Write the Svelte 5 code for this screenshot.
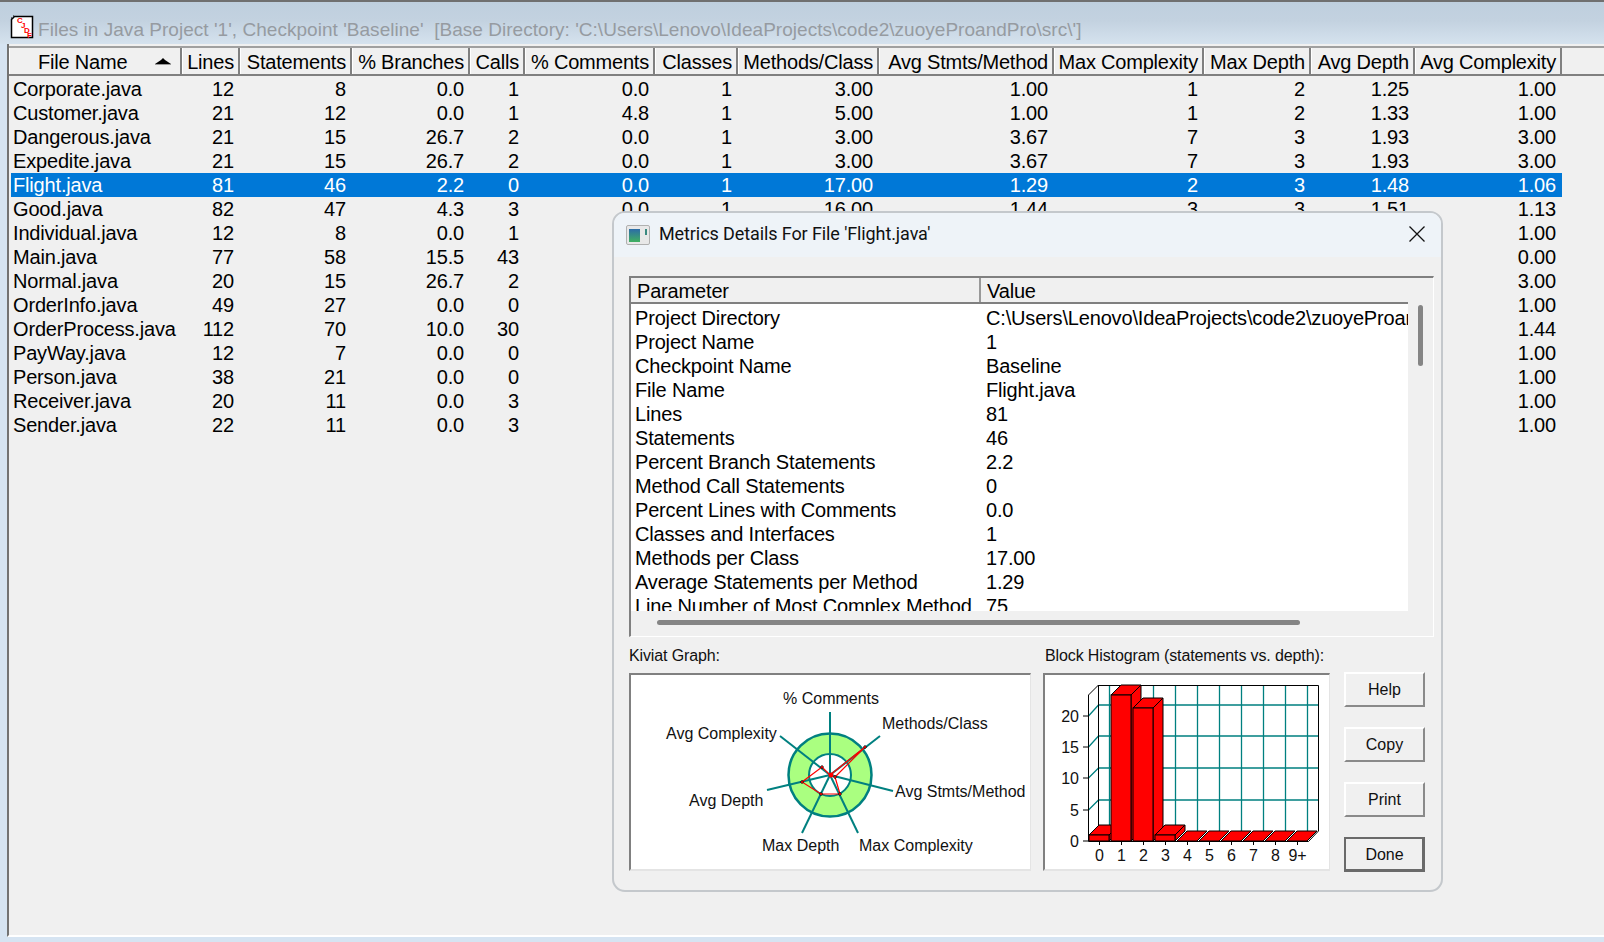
<script>
  const edges = [9,182,240,352,470,525,655,738,879,1054,1204,1311,1415,1562];
  const headers = ['File Name','Lines','Statements','% Branches','Calls','% Comments','Classes','Methods/Class','Avg Stmts/Method','Max Complexity','Max Depth','Avg Depth','Avg Complexity'];
  const tpl = edges.slice(1).map((e,i)=>(e-edges[i])+'px').join(' ');
  const rows = [
    ['Corporate.java','12','8','0.0','1','0.0','1','3.00','1.00','1','2','1.25','1.00'],
    ['Customer.java','21','12','0.0','1','4.8','1','5.00','1.00','1','2','1.33','1.00'],
    ['Dangerous.java','21','15','26.7','2','0.0','1','3.00','3.67','7','3','1.93','3.00'],
    ['Expedite.java','21','15','26.7','2','0.0','1','3.00','3.67','7','3','1.93','3.00'],
    ['Flight.java','81','46','2.2','0','0.0','1','17.00','1.29','2','3','1.48','1.06'],
    ['Good.java','82','47','4.3','3','0.0','1','16.00','1.44','3','3','1.51','1.13'],
    ['Individual.java','12','8','0.0','1','','','','','','','','1.00'],
    ['Main.java','77','58','15.5','43','','','','','','','','0.00'],
    ['Normal.java','20','15','26.7','2','','','','','','','','3.00'],
    ['OrderInfo.java','49','27','0.0','0','','','','','','','','1.00'],
    ['OrderProcess.java','112','70','10.0','30','','','','','','','','1.44'],
    ['PayWay.java','12','7','0.0','0','','','','','','','','1.00'],
    ['Person.java','38','21','0.0','0','','','','','','','','1.00'],
    ['Receiver.java','20','11','0.0','3','','','','','','','','1.00'],
    ['Sender.java','22','11','0.0','3','','','','','','','','1.00'],
  ];
  const details = [
    ['Project Directory','C:\\Users\\Lenovo\\IdeaProjects\\code2\\zuoyeProandPro\\src\\'],
    ['Project Name','1'],['Checkpoint Name','Baseline'],['File Name','Flight.java'],['Lines','81'],['Statements','46'],
    ['Percent Branch Statements','2.2'],['Method Call Statements','0'],['Percent Lines with Comments','0.0'],
    ['Classes and Interfaces','1'],['Methods per Class','17.00'],['Average Statements per Method','1.29'],
    ['Line Number of Most Complex Method','75'],
  ];

  // Kiviat graph, in page coordinates
  const cx = 830, cy = 775;
  const spokes = [[830,712],[880,736],[893,791],[858,833],[802,833],[767,790],[780,736]];
  const kLabels = [
    ['% Comments',783,704],['Methods/Class',882,729],['Avg Stmts/Method',895,797],
    ['Max Complexity',859,851],['Max Depth',762,851],['Avg Depth',689,806],['Avg Complexity',666,739],
  ];
  const poly = [[830,775],[865,747],[835,777],[840,794],[821,794],[802,782],[822,767]];
  const polyStr = poly.map(p=>p.join(',')).join(' ');

  // Histogram
  const bx = [1089,1111,1133,1155,1177,1199,1221,1243,1265,1287];
  const tops = [835,695,708,835,841,841,841,841,841,841];
  const gridY = [[705,716],[736,747],[768,778],[800,810]];
  const gridX = Array.from({length:10},(_,i)=>1109.5+22*i);
  const yLabels = [['20',716],['15',747],['10',778],['5',810],['0',841]];
  const xLabels = ['0','1','2','3','4','5','6','7','8','9+'];
</script>

<div class="screen">
  <div class="titlebar">
    <svg class="fileicon" width="24" height="24" viewBox="0 0 24 24">
      <path d="M4.500 1.500H22.500V22.500H1.500V4.500Z" fill="#fff" stroke="#000" stroke-width="1.500"/>
      <path d="M1 3h1M3 1h1" stroke="#000" stroke-width="1"/>
      <text x="7" y="8" class="ic">C</text>
      <text x="11" y="13" class="ic">J</text>
      <text x="14" y="18" class="ic">D</text>
      <text x="17" y="23" class="ic">F</text>
    </svg>
    <span class="wintitle">Files in Java Project '1', Checkpoint 'Baseline'&nbsp;&nbsp;[Base Directory: 'C:\Users\Lenovo\IdeaProjects\code2\zuoyeProandPro\src\']</span>
  </div>

  <div class="window">
    <div class="thead">
      <div class="hgrid" style="grid-template-columns:{tpl}">
        {#each headers as h, i}
          <div class="th">
            {h}
            {#if i === 0}
              <svg class="sort" width="16" height="7" viewBox="0 0 16 7"><path d="M0 6 6 2 8 0 10 2 16 6Z" fill="#000"/><path d="M0 6.500H16" stroke="#999" stroke-width="1"/></svg>
            {/if}
          </div>
        {/each}
      </div>
    </div>
    <div class="tbody">
      {#each rows as r, n}
        <div class="row" class:sel={n === 4} style="grid-template-columns:{tpl}">
          {#each r as c, i}
            <div class="td" class:name={i === 0}>{c}</div>
          {/each}
        </div>
      {/each}
    </div>
  </div>

  <div class="dialog">
    <div class="dlgtitle">
      <svg width="24" height="20" viewBox="0 0 24 20">
        <defs><linearGradient id="ig" x1="0" y1="0" x2="0" y2="1"><stop offset="0" stop-color="#2c6ca8"/><stop offset="1" stop-color="#40b060"/></linearGradient></defs>
        <rect x="0.500" y="0.500" width="23" height="19" rx="1.500" fill="#e8e8e8" stroke="#b0b0b0"/>
        <rect x="3" y="4" width="11" height="13" fill="url(#ig)"/>
        <rect x="19" y="4" width="2" height="6" fill="#3a8a80"/>
      </svg>
      <span class="dlgtext">Metrics Details For File 'Flight.java'</span>
      <svg class="close" width="16" height="16" viewBox="0 0 16 16"><path d="M0.500 0.500 15.500 15.500M15.500 0.500 0.500 15.500" stroke="#111" stroke-width="1.300"/></svg>
    </div>
    <div class="dlgbody">
      <div class="frame">
        <div class="lhead">
          <div class="lh p">Parameter</div>
          <div class="lh v">Value</div>
        </div>
        <div class="lmain">
          <div class="lbody">
            {#each details as d}
              <div class="lrow"><div class="lp">{d[0]}</div><div class="lv">{d[1]}</div></div>
            {/each}
          </div>
          <div class="vtrack"><div class="vthumb"></div></div>
        </div>
        <div class="htrack"><div class="hthumb"></div></div>
      </div>

      <div class="lower">
        <div class="kiviat">
          <div class="cap">Kiviat Graph:</div>
          <div class="well kwell">
            <svg width="398" height="194" viewBox="631 675 398 194">
              <circle cx={cx} cy={cy} r="41.500" fill="#aaff80" stroke="#008080" stroke-width="2.500"/>
              <circle cx={cx} cy={cy} r="21" fill="#fff" stroke="#008080" stroke-width="2"/>
              {#each spokes as s}
                <line x1={cx} y1={cy} x2={s[0]} y2={s[1]} stroke="#008080" stroke-width="2"/>
              {/each}
              <polygon points={polyStr} fill="none" stroke="#f00" stroke-width="1.200"/>
              <circle cx={cx + 1} cy={cy} r="2.500" fill="#f00"/>
              {#each poly.slice(1) as p}
                <path d="M{p[0]-2} {p[1]}h4M{p[0]} {p[1]-2}v4" stroke="#000" stroke-width="1"/>
                <circle cx={p[0]} cy={p[1]} r="1" fill="#f00"/>
              {/each}
              {#each kLabels as l}
                <text x={l[1]} y={l[2]} class="chart">{l[0]}</text>
              {/each}
            </svg>
          </div>
        </div>

        <div class="hist">
          <div class="cap">Block Histogram (statements vs. depth):</div>
          <div class="well hwell">
            <svg width="283" height="194" viewBox="1045 675 283 194">
              {#each gridY as g}
                <path d="M1098.500 {g[0]}H1319M1098.500 {g[0]}L1088.500 {g[1]}" stroke="#008080" stroke-width="1.300" fill="none"/>
              {/each}
              {#each gridX as x}
                <line x1={x} y1="685" x2={x} y2="831" stroke="#008080" stroke-width="1.300"/>
              {/each}
              <path d="M1088.500 841.500V695L1098.500 685V831M1098.500 685.500H1318.500V831L1308.500 841.500H1088.500" fill="none" stroke="#000" stroke-width="1"/>
              {#each bx as x, i}
                {@const t = tops[i]}
                <path d="M{x} {t}L{x+10} {t-10}H{x+30}L{x+20} {t}Z" fill="#f00" stroke="#000" stroke-width="1"/>
                {#if t < 841}
                  <path d="M{x+20} {t}L{x+30} {t-10}V831L{x+20} 841Z" fill="#f00" stroke="#000" stroke-width="1"/>
                  <rect x={x} y={t} width="20" height={841-t} fill="#f00" stroke="#000" stroke-width="1"/>
                {/if}
              {/each}
              {#each yLabels as l}
                <text x="1079" y={l[1]+6} text-anchor="end" class="chart">{l[0]}</text>
                <line x1="1083" y1={l[1]} x2="1088" y2={l[1]} stroke="#000"/>
              {/each}
              {#each xLabels as l, i}
                <text x={1099.500+22*i} y="861" text-anchor="middle" class="chart">{l}</text>
                <line x1={1099.500+22*i} y1="841" x2={1099.500+22*i} y2="845" stroke="#000"/>
              {/each}
            </svg>
          </div>
        </div>

        <div class="buttons">
          <button>Help</button>
          <button>Copy</button>
          <button>Print</button>
          <button class="def">Done</button>
        </div>
      </div>
    </div>
  </div>
</div>

<style>
  :global(body) { margin: 0; background: #d6e4f2; }
  .screen {
    position: relative; width: 1604px; height: 942px; overflow: hidden;
    display: flex; flex-direction: column;
    font-family: "Liberation Sans", Arial, sans-serif; color: #000;
    background: #d6e4f2;
  }
  .titlebar {
    height: 44px; box-sizing: border-box; flex: none;
    border-top: 2px solid #707070;
    background: linear-gradient(#bfcfde 0%, #c3d2e0 45%, #d5e2ee 100%);
    display: flex; align-items: flex-end; padding: 0 0 2px 10px; gap: 4px;
  }
  .fileicon { flex: none; margin-bottom: 3px; }
  .ic { font-family: "Liberation Sans", Arial, sans-serif; font-size: 8px; font-weight: 700; fill: #f00; }
  .wintitle { font-size: 19px; color: #969ba1; line-height: 24px; white-space: pre; letter-spacing: 0.030px; }
  .window {
    flex: none; height: 893px; margin-left: 7px; box-sizing: border-box;
    border-left: 2px solid #737373; border-bottom: 2px solid #fff; background: #f0f0f0;
  }
  .thead {
    height: 30px; box-sizing: border-box; margin-top: 2px;
    border-top: 2px solid #a0a0a0; border-bottom: 2px solid #808080;
  }
  .hgrid { display: grid; height: 100%; }
  .th {
    font-size: 20px; line-height: 28px; text-align: right; padding-right: 4px; letter-spacing: -0.200px;
    border-right: 2px solid #808080; border-left: 1px solid #fff; white-space: nowrap;
    position: relative; overflow: hidden;
  }
  .th:first-child { padding-right: 0; text-align: left; padding-left: 28px; }
  .sort { position: absolute; left: 145px; top: 10px; }
  .tbody { padding-top: 1px; }
  .row { display: grid; height: 24px; width: max-content; }
  .td { font-size: 20px; line-height: 24px; text-align: right; padding-right: 6px; white-space: nowrap; letter-spacing: -0.170px; }
  .td.name { text-align: left; padding-left: 4px; padding-right: 0; }
  .row.sel { background: linear-gradient(90deg, transparent 2px, #0078d7 2px); color: #fff; }

  .dialog {
    position: absolute; left: 612px; top: 211px; width: 831px; height: 681px; box-sizing: border-box;
    border: 2px solid #c4c8cc; border-radius: 13px; background: #f0f0f0; overflow: hidden;
  }
  .dlgtitle {
    height: 44px; background: #eef3f8; display: flex; align-items: center; padding: 0 16px 0 12px; gap: 9px;
  }
  .dlgtext { font-family: Roboto, "Liberation Sans", sans-serif; font-size: 18px; line-height: 24px; color: #111; flex: 1; margin-top: -3px; letter-spacing: -0.100px; }
  .close { margin-top: -3px; }
  .dlgbody { padding: 19px 7px 0 15px; }
  .frame {
    height: 361px; box-sizing: border-box; border-top: 2px solid #808080; border-left: 2px solid #808080;
    border-right: 1px solid #fff; border-bottom: 1px solid #fff;
    position: relative;
  }
  .lhead { display: flex; height: 26px; width: 777px; box-sizing: border-box; border-bottom: 2px solid #808080; }
  .lh { font-size: 20px; line-height: 26px; padding-left: 6px; box-sizing: border-box; letter-spacing: -0.170px; }
  .lh.p { width: 350px; border-right: 2px solid #999; }
  .lh.v { flex: 1; }
  .lmain { display: flex; height: 307px; }
  .lbody { width: 777px; background: #fff; overflow: hidden; padding-top: 2px; box-sizing: border-box; }
  .lrow { display: flex; height: 24px; font-size: 20px; line-height: 24px; white-space: nowrap; letter-spacing: -0.170px; }
  .lp { width: 352px; flex: none; padding-left: 4px; box-sizing: border-box; }
  .lv { overflow: hidden; flex: 1; padding-left: 3px; }
  .vtrack { flex: 1; position: relative; }
  .vthumb { width: 5px; height: 61px; background: #858585; border-radius: 3px; margin: 1px 0 0 10px; }
  .htrack { padding: 9px 0 0 26px; }
  .hthumb { width: 643px; height: 5px; border-radius: 3px; background: #858585; }

  .lower { display: flex; margin-top: 6px; }
  .cap { font-size: 16px; line-height: 24px; height: 29px; padding-top: 1px; letter-spacing: -0.120px; white-space: nowrap; color: #111; }
  .kiviat { width: 414px; flex: none; }
  .hist { width: 301px; flex: none; }
  .hist .cap { padding-left: 2px; }
  .well {
    background: #fff; box-sizing: border-box; height: 198px;
    border-top: 2px solid #808080; border-left: 2px solid #808080;
    border-right: 1px solid #e4e4e4; border-bottom: 2px solid #e4e4e4;
    overflow: hidden;
  }
  .kwell { width: 402px; }
  .hwell { width: 287px; }
  .well svg { display: block; }
  .chart { font-family: "Liberation Sans", Arial, sans-serif; font-size: 16px; fill: #111; }
  .buttons { display: flex; flex-direction: column; gap: 20px; padding-top: 29px; width: 81px; }
  button {
    width: 81px; height: 35px; box-sizing: border-box; padding: 0; background: #f0f0f0;
    font-family: "Liberation Sans", Arial, sans-serif; font-size: 16px; color: #111;
    border-top: 2px solid #fff; border-left: 2px solid #fff;
    border-right: 2px solid #8a8a8a; border-bottom: 2px solid #8a8a8a; border-radius: 0;
  }
  button.def { border: 2px solid #6a6a6a; border-bottom-width: 3px; border-right-width: 3px; padding: 1px 0 0 1px; }
</style>
